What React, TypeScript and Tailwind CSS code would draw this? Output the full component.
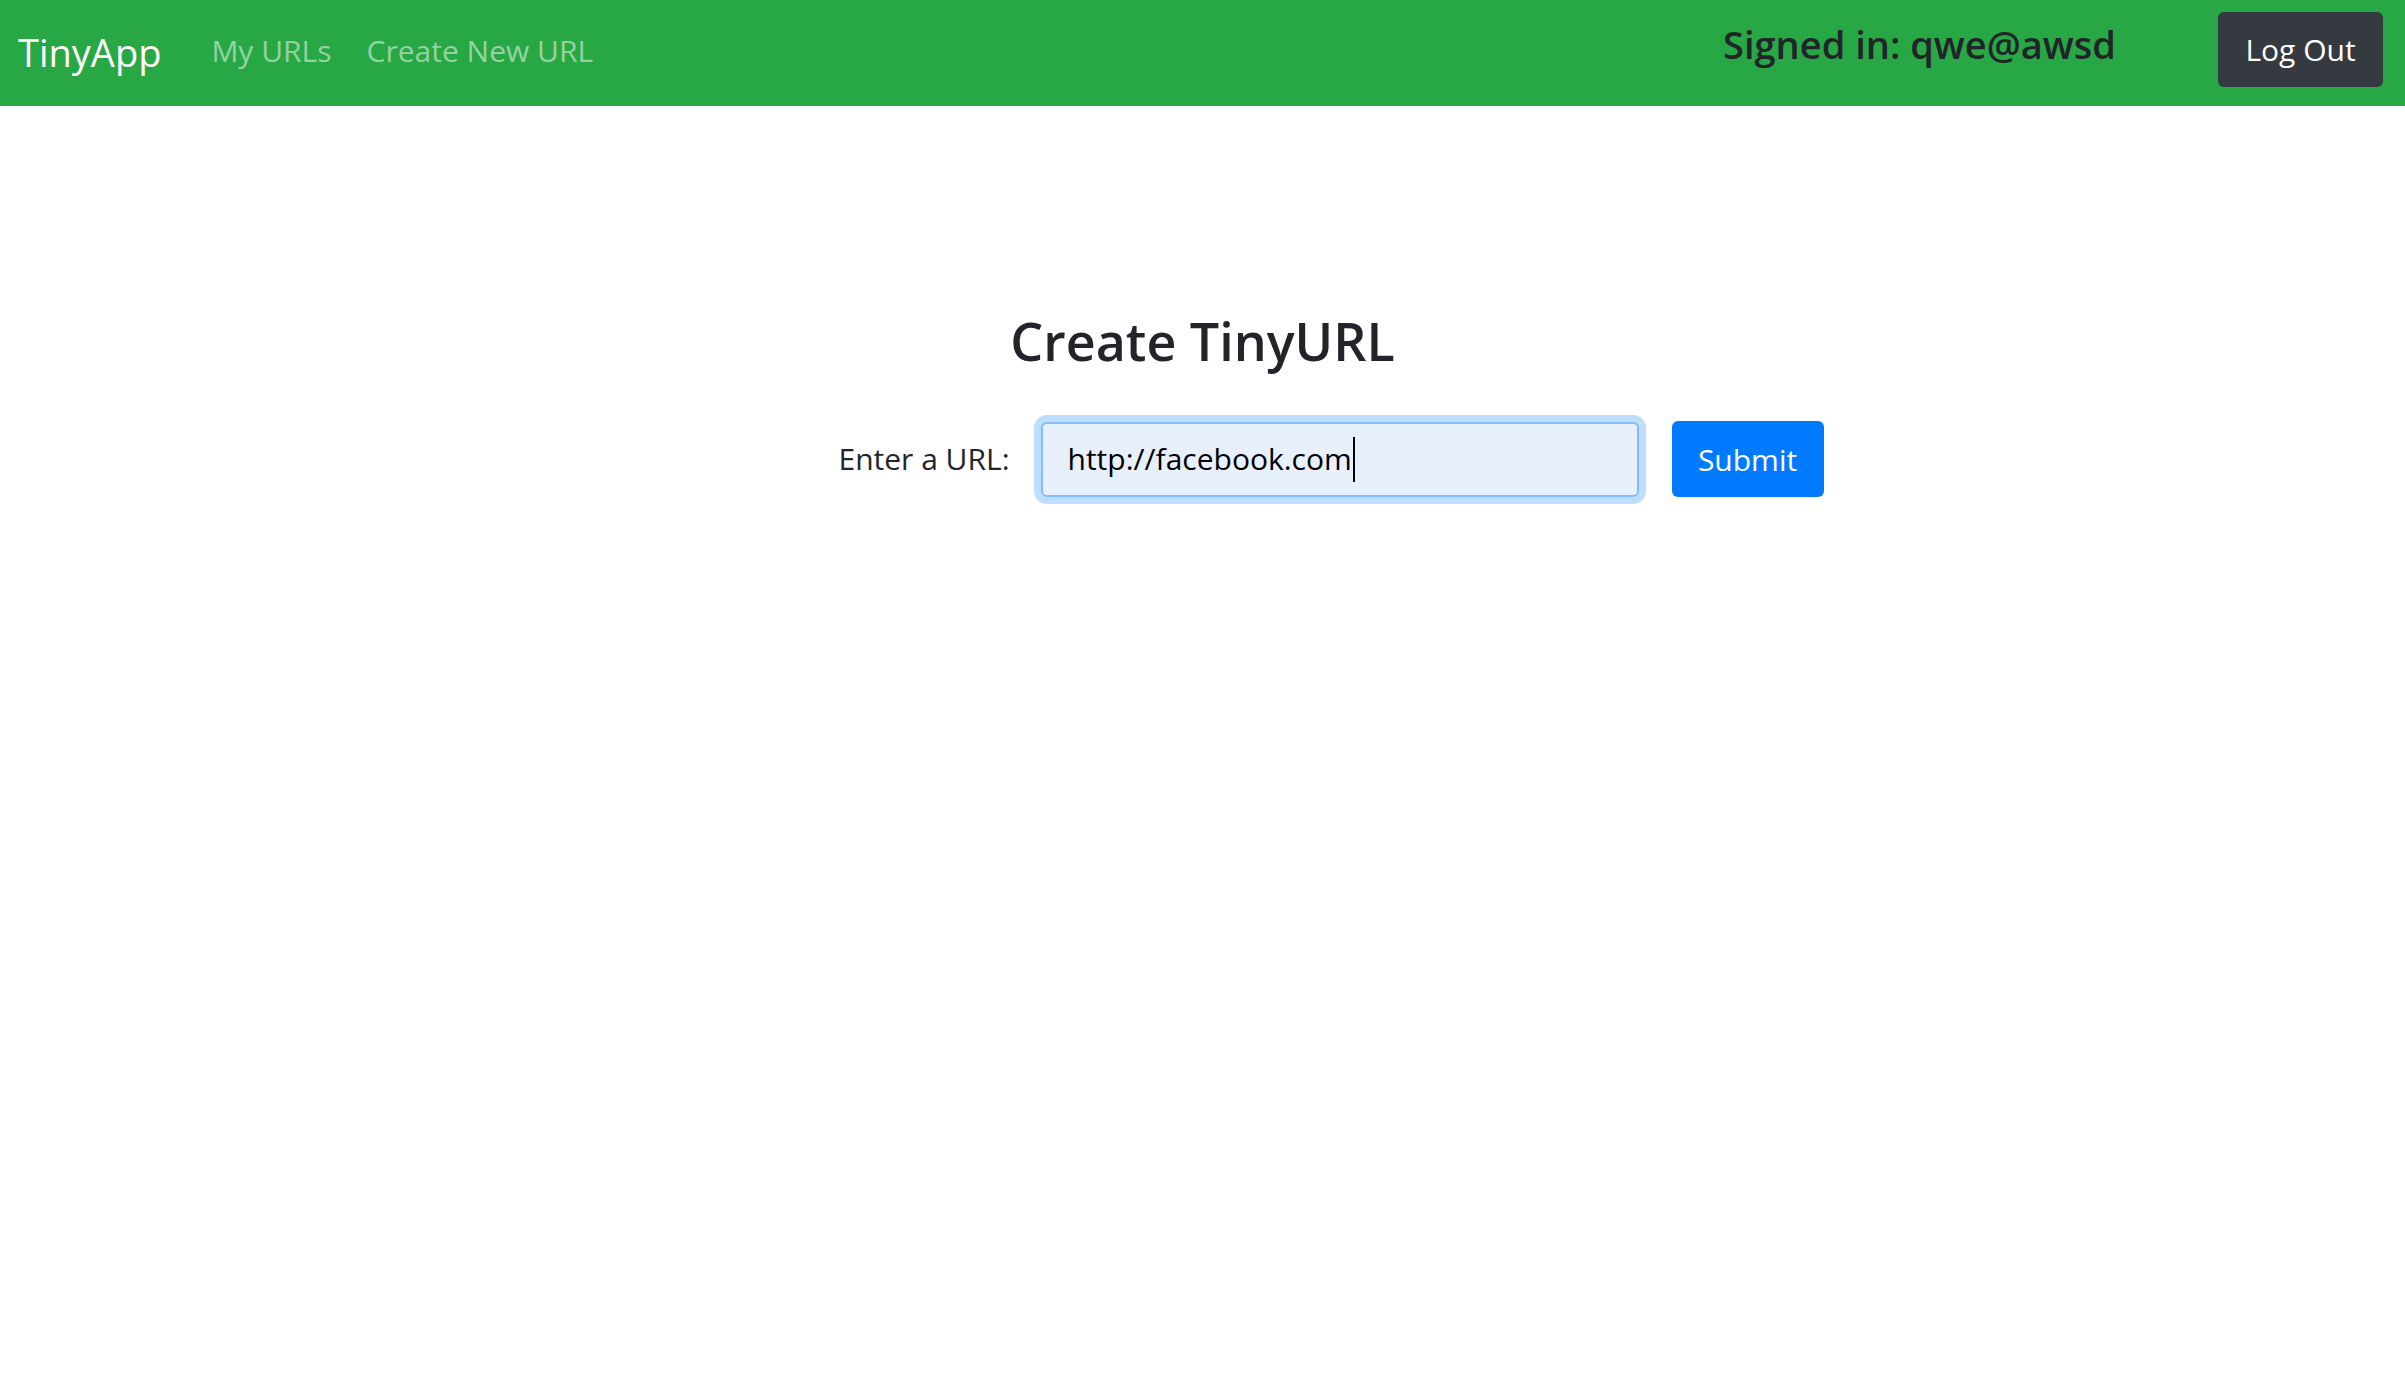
import { useState } from "react";

// Top bar: brand, nav links, signed-in user, log out
function NavBar({ email }: { email: string }) {
  return (
    <nav className="flex h-[106px] items-center bg-[#28a745] pl-[18px] pr-[22px]">
      <a href="#" className="mb-[3px] text-[38px] leading-none text-white">
        TinyApp
      </a>
      <div className="mb-[4px] ml-[50px] flex items-center gap-[35px] text-[30px] leading-none text-white/50">
        <a href="#">My URLs</a>
        <a href="#">Create New URL</a>
      </div>
      <div className="flex-1" />
      <span className="mb-[18px] mr-[102px] text-[38px] font-semibold leading-none text-[#212529]">
        Signed in: {email}
      </span>
      <button className="mb-[7px] flex h-[75px] w-[165px] items-center justify-center rounded-[6px] bg-[#343a40] text-[30px] text-white">
        Log Out
      </button>
    </nav>
  );
}

export default function App() {
  const [url] = useState("http://facebook.com");

  return (
    <div className="min-h-screen bg-white font-['Open_Sans',sans-serif] text-[#212529]">
      <NavBar email="qwe@awsd" />

      <main className="pt-[204px]">
        <h2 className="text-center text-[52px] font-semibold leading-[1.2] text-[#212529]">Create TinyURL</h2>

        {/* Form row */}
        <form className="mt-[49px] flex items-center justify-center pl-[257px]" onSubmit={(e) => e.preventDefault()}>
          <label className="mr-[31px] text-[30px] leading-none">Enter a URL:</label>
          <div className="flex h-[75px] w-[598px] items-center rounded-[6px] border-2 border-[#80bdff] bg-[#e8f0fe] pl-[25px] text-[30px] leading-none text-black shadow-[0_0_0_7px_rgba(0,123,255,0.25)]">
            <span>{url}</span>
            <span className="ml-[1px] h-[45px] w-[2px] bg-black" />
          </div>
          <button
            type="submit"
            className="ml-[33px] flex h-[76px] w-[152px] items-center justify-center rounded-[6px] bg-[#007bff] text-[30px] text-white"
          >
            Submit
          </button>
        </form>
      </main>
    </div>
  );
}
